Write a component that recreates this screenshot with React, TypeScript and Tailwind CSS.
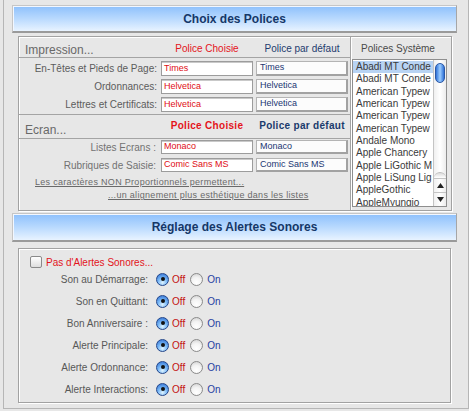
import React from "react";

// ============================================================================
// PREFERENCES — Choix des Polices / Réglage des Alertes Sonores
// ============================================================================

// names as they show in the narrow list (clipped by the scrollbar)
const systemFonts = [
  "Abadi MT Conde",
  "Abadi MT Conde",
  "American Typew",
  "American Typew",
  "American Typew",
  "American Typew",
  "Andale Mono",
  "Apple Chancery",
  "Apple LiGothic M",
  "Apple LiSung Lig",
  "AppleGothic",
  "AppleMyungjo",
];

const alertRows = [
  "Son au Démarrage:",
  "Son en Quittant:",
  "Bon Anniversaire :",
  "Alerte Principale:",
  "Alerte Ordonnance:",
  "Alerte Interactions:",
];

function Header({ title, className = "" }: { title: string; className?: string }) {
  return (
    <div
      className={`w-[445px] flex items-center justify-center border border-[#c6c6c6] border-r-[#a6a6a6] border-b-2 border-b-[#9a9a9a] bg-linear-to-b from-[#8dc0fc] via-[#b8d9fe] to-[#e8f3ff] shadow-[inset_1px_1px_0_#f2f7ff] ${className}`}
    >
      <span className="text-[12px] font-bold text-[#153768]">{title}</span>
    </div>
  );
}

function ChosenInput({ value, h }: { value: string; h: string }) {
  return (
    <div
      className={`w-[92px] ${h} flex items-center bg-white border border-[#9c9c9c] shadow-[inset_0_1px_0_#c9c9c9] pl-[2px] text-[9px] text-[#e00d14] overflow-hidden whitespace-nowrap`}
    >
      {value}
    </div>
  );
}

function DefaultInput({ value, h }: { value: string; h: string }) {
  return (
    <div
      className={`w-[92px] ${h} flex items-center bg-[#fcfcfc] border border-[#b4b4b4] border-r-2 border-b-2 border-r-[#a2a2a2] border-b-[#a2a2a2] pl-[3px] text-[9px] text-[#1b3672] overflow-hidden whitespace-nowrap`}
    >
      {value}
    </div>
  );
}

function Radio({ on }: { on?: boolean }) {
  if (on) {
    return (
      <span className="flex w-[13px] h-[13px] items-center justify-center rounded-full border border-[#23468a] bg-[radial-gradient(circle_at_50%_78%,#dff4ff_0%,#76b6f6_45%,#2d6ccf_100%)]">
        <span className="w-[4px] h-[4px] rounded-full bg-[#111]" />
      </span>
    );
  }
  return (
    <span className="block w-[13px] h-[13px] rounded-full border border-[#8a8a8a] bg-[radial-gradient(circle_at_50%_78%,#ffffff_0%,#f3f3f3_50%,#cdcdcd_100%)]" />
  );
}

export default function App() {
  return (
    <div className="w-[469px] h-[411px] overflow-hidden bg-[#e7e7e7] font-['Liberation_Sans',Arial,sans-serif]">
      <div className="ml-[3px] w-[466px] h-[409px] border-l border-r border-b border-[#b6b6b6] pl-[8px] pt-[5px]">
        <Header title="Choix des Polices" className="h-[28px]" />

        {/* Polices panel */}
        <div className="ml-[6px] mt-[3px] w-[434px] h-[175px] flex border border-[#a2a2a2] shadow-[inset_1px_1px_0_#fff,1px_1px_0_#fff]">
          <div className="w-[331px] flex flex-col">
            <div className="h-[21px] flex items-end border-b border-[#a4a4a4]">
              <div className="w-[138px] pl-[6px] text-[12px] leading-[14px] text-[#696969]">Impression...</div>
              <div className="ml-[4px] w-[92px] pb-[2px] text-center text-[10px] leading-[12px] text-[#e4141b]">
                Police Choisie
              </div>
              <div className="ml-[3px] w-[92px] pb-[2px] text-center text-[10px] leading-[12px] text-[#1e3c6e]">
                Police par défaut
              </div>
            </div>

            <div className="flex flex-col gap-[3px] pt-[3px] pb-[2px] border-b border-[#a4a4a4]">
              {[
                ["En-Têtes et Pieds de Page:", "Times", "Times"],
                ["Ordonnances:", "Helvetica", "Helvetica"],
                ["Lettres et Certificats:", "Helvetica", "Helvetica"],
              ].map(([label, chosen, def]) => (
                <div key={label} className="h-[15px] flex items-center">
                  <div className="w-[138px] text-right text-[10px] text-[#5c5c5c] whitespace-nowrap">{label}</div>
                  <div className="ml-[4px]">
                    <ChosenInput value={chosen} h="h-[15px]" />
                  </div>
                  <div className="ml-[3px]">
                    <DefaultInput value={def} h="h-[15px]" />
                  </div>
                </div>
              ))}
            </div>

            <div className="h-[24px] flex items-end border-b border-[#a4a4a4]">
              <div className="w-[138px] pl-[6px] pb-[1px] text-[12px] leading-[14px] text-[#696969]">Ecran...</div>
              <div className="ml-[4px] w-[92px] pb-[6px] text-center text-[10px] leading-[12px] font-bold tracking-[0.3px] text-[#e4141b]">
                Police Choisie
              </div>
              <div className="ml-[3px] w-[92px] pb-[6px] text-center text-[10px] leading-[12px] font-bold tracking-[0.3px] text-[#1a3a6c]">
                Police par défaut
              </div>
            </div>

            <div className="flex flex-col gap-[4px] pt-[1px]">
              {[
                ["Listes Ecrans :", "Monaco", "Monaco"],
                ["Rubriques de Saisie:", "Comic Sans MS", "Comic Sans MS"],
              ].map(([label, chosen, def]) => (
                <div key={label} className="h-[14px] flex items-center">
                  <div className="w-[137px] text-right text-[10px] text-[#727272] whitespace-nowrap">{label}</div>
                  <div className="ml-[5px]">
                    <ChosenInput value={chosen} h="h-[14px]" />
                  </div>
                  <div className="ml-[3px]">
                    <DefaultInput value={def} h="h-[14px]" />
                  </div>
                </div>
              ))}
            </div>

            <div className="mt-[4px] pl-[16px] text-[9px] leading-[12px] tracking-[0.3px] text-[#6a6a6a] underline whitespace-nowrap">
              Les caractères NON Proportionnels permettent...
            </div>
            <div className="mt-[1px] pl-[89px] text-[9px] leading-[12px] tracking-[0.3px] text-[#6a6a6a] underline whitespace-nowrap">
              ...un alignement plus esthétique dans les listes
            </div>
          </div>

          {/* Polices Système */}
          <div className="w-[101px] flex flex-col border-l border-[#a4a4a4] shadow-[inset_1px_0_0_#fff]">
            <div className="h-[22px] flex items-end pl-[10px] pb-[4px] text-[10px] leading-[12px] text-[#4a4a4a] whitespace-nowrap">
              Polices Système
            </div>
            <div className="ml-[1px] w-[95px] h-[148px] flex border border-[#8e8e8e] bg-white">
              <div className="w-[80px] overflow-hidden pt-[1px]">
                {systemFonts.map((f, i) => (
                  <div
                    key={i}
                    className={`h-[12.35px] leading-[12.35px] pl-[3px] text-[10px] text-[#3a3a3a] whitespace-nowrap ${
                      i === 0 ? "bg-[#b8d3f3]" : ""
                    }`}
                  >
                    {f}
                  </div>
                ))}
              </div>
              <div className="w-[13px] flex flex-col border-l border-[#c4c4c4] bg-linear-to-r from-[#f0f0f0] via-white to-[#ececec]">
                <div className="mt-[3px] mx-[1px] h-[20px] rounded-full border border-[#2b58a6] bg-linear-to-r from-[#2f72d8] via-[#9ccdff] to-[#2e6fd4]" />
                <div className="flex-1" />
                <div className="h-[6px] rounded-t-full border-t border-[#bdbdbd] bg-linear-to-b from-[#dcdcdc] to-white" />
                <div className="h-[14px] flex items-center justify-center border-t border-[#c4c4c4]">
                  <svg width="7" height="5" viewBox="0 0 7 5">
                    <polygon points="3.5,0 7,5 0,5" fill="#222" />
                  </svg>
                </div>
                <div className="h-[14px] flex items-center justify-center border-t border-[#c4c4c4]">
                  <svg width="7" height="5" viewBox="0 0 7 5">
                    <polygon points="0,0 7,0 3.5,5" fill="#222" />
                  </svg>
                </div>
              </div>
            </div>
          </div>
        </div>

        <Header title="Réglage des Alertes Sonores" className="h-[29px] mt-[2px]" />

        {/* Alertes panel */}
        <div className="ml-[6px] mt-[6px] w-[433px] h-[155px] flex flex-col border border-[#a2a2a2] shadow-[inset_1px_1px_0_#fff,1px_1px_0_#fff]">
          <div className="mt-[7px] h-[12px] flex items-center pl-[11px]">
            <span className="block w-[12px] h-[12px] rounded-[2px] border border-[#8a8a8a] bg-linear-to-b from-white to-[#dedede]" />
            <span className="ml-[4px] text-[10px] text-[#e3141c] whitespace-nowrap">Pas d'Alertes Sonores...</span>
          </div>
          {alertRows.map((label) => (
            <div key={label} className="h-[22px] flex items-center">
              <div className="w-[129px] text-right text-[10px] text-[#585858] whitespace-nowrap">{label}</div>
              <div className="ml-[8px]">
                <Radio on />
              </div>
              <span className="ml-[3px] text-[10px] text-[#c41010]">Off</span>
              <div className="ml-[5px]">
                <Radio />
              </div>
              <span className="ml-[4px] text-[10px] text-[#1f3fa2]">On</span>
            </div>
          ))}
        </div>
      </div>
    </div>
  );
}
